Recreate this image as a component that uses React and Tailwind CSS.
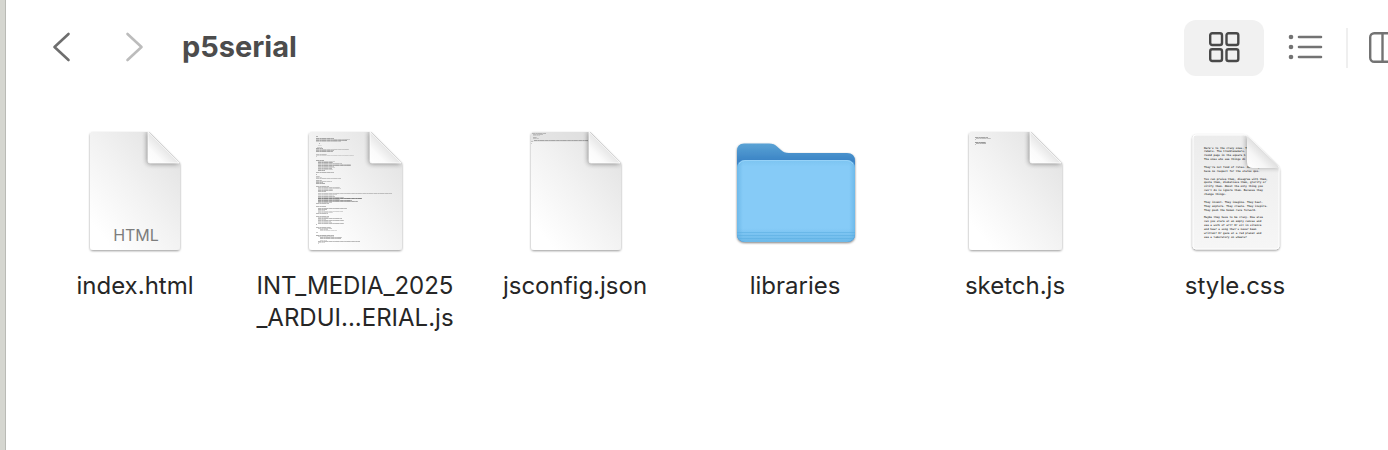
import React, { useId } from "react";

const poem = [
  "Here's to the crazy ones. The",
  "rebels. The troublemakers.",
  "round pegs in the square h",
  "The ones who see things di",
  "",
  "They're not fond of rules. And they",
  "have no respect for the status quo.",
  "",
  "You can praise them, disagree with them,",
  "quote them, disbelieve them, glorify or",
  "vilify them. About the only thing you",
  "can't do is ignore them. Because they",
  "change things.",
  "",
  "They invent. They imagine. They heal.",
  "They explore. They create. They inspire.",
  "They push the human race forward.",
  "",
  "Maybe they have to be crazy. How else",
  "can you stare at an empty canvas and",
  "see a work of art? Or sit in silence",
  "and hear a song that's never been",
  "written? Or gaze at a red planet and",
  "see a laboratory on wheels?",
];

// Thumbnail rows: [x, y, length, opacity]
const longScript = [
  [10, 5, 2, 0.5], [10, 7, 18, 0.6], [10, 8, 34, 0.35], [10, 9, 31, 0.6], [10, 10, 25, 0.3],
  [13, 12, 1, 0.5], [12, 14, 4, 0.2], [11, 16, 5, 0.3],
  [10, 17, 7, 0.6], [10, 18, 33, 0.35], [10, 19, 18, 0.5], [10, 20, 17, 0.6],
  [10, 23, 11, 0.4], [10, 24, 38, 0.25], [10, 25, 1, 0.3],
  [10, 29, 8, 0.6], [12, 30, 17, 0.3], [12, 31, 15, 0.6], [12, 32, 24, 0.4], [12, 33, 33, 0.3], [12, 34, 33, 0.6],
  [12, 35, 16, 0.4], [12, 36, 17, 0.3], [12, 37, 14, 0.5], [12, 38, 15, 0.3], [12, 39, 7, 0.6],
  [10, 41, 18, 0.5], [10, 43, 1, 0.5],
  [10, 45, 4, 0.4], [10, 46, 6, 0.3], [10, 47, 25, 0.4], [10, 49, 6, 0.5], [10, 50, 16, 0.4], [10, 51, 7, 0.5], [10, 52, 9, 0.6],
  [10, 55, 13, 0.5], [12, 56, 22, 0.4], [12, 57, 23, 0.3], [12, 58, 15, 0.3], [12, 59, 15, 0.5], [12, 60, 8, 0.5],
  [12, 62, 74, 0.4], [12, 63, 19, 0.3], [12, 64, 16, 0.2], [12, 65, 17, 0.5], [12, 66, 26, 0.4], [12, 67, 44, 0.9], [12, 68, 22, 0.4], [12, 69, 34, 0.7], [12, 70, 40, 0.6], [12, 71, 14, 0.4], [10, 72, 13, 0.5],
  [10, 75, 10, 0.5], [12, 77, 29, 0.5], [12, 78, 9, 0.5], [12, 79, 7, 0.3], [12, 80, 25, 0.3], [12, 81, 15, 0.3], [10, 82, 12, 0.5],
  [10, 85, 13, 0.5], [12, 86, 11, 0.3], [12, 87, 24, 0.5], [12, 88, 8, 0.3], [12, 89, 26, 0.5], [12, 90, 13, 0.3], [12, 91, 14, 0.3], [12, 92, 26, 0.5], [10, 93, 1, 0.5],
  [10, 96, 15, 0.5], [12, 97, 14, 0.4], [14, 98, 8, 0.4], [14, 99, 17, 0.3], [10, 101, 2, 0.4],
  [10, 104, 18, 0.6], [12, 105, 16, 0.3], [14, 106, 22, 0.5], [14, 107, 21, 0.5], [14, 109, 7, 0.3], [12, 110, 42, 0.5], [12, 111, 7, 0.3], [12, 112, 1, 0.3],
];

const configScript = [
  [6, 2, 14, 0.4], [7, 3, 10, 0.35], [7, 4, 7, 0.2], [7, 6, 4, 0.4], [7, 7, 6, 0.3], [8, 9, 54, 0.55], [5, 10, 2, 0.3], [5, 12, 1, 0.3],
];

const sketchScript = [
  [10, 6, 13, 0.6], [11, 7, 15, 0.4], [10, 8, 1, 0.4], [10, 11, 11, 0.7], [11, 12, 10, 0.5], [10, 13, 1, 0.4],
];

function CodePreview({ rows, x }) {
  return (
    <g fill="#444">
      {rows.map(([left, top, length, opacity], i) => (
        <g key={i} opacity={opacity}>
          <rect x={x + left - 4} y={top + 3} width={length} height="0.9" opacity="0.5" />
          <path
            d={`M${x + left - 4} ${top + 3.45}h${length}`}
            stroke="#333"
            strokeWidth="0.7"
            strokeDasharray="3 1 1.4 0.6 4 1.2"
            opacity="0.6"
          />
        </g>
      ))}
    </g>
  );
}

function DocumentIcon({ left = 5, right = 97, children }) {
  const id = useId();
  const fold = right - 33;
  return (
    <svg viewBox="-1 0 102 128" className="h-32 w-[102px]" aria-hidden="true">
      <defs>
        <linearGradient id={`${id}p`} x1="0.9" y1="0.1" x2="0.15" y2="0.9">
          <stop offset="0" stopColor="#e3e3e3" />
          <stop offset="0.5" stopColor="#f2f2f2" />
          <stop offset="1" stopColor="#fff" />
        </linearGradient>
        <linearGradient id={`${id}f`} x1="0.5" y1="0.5" x2="0" y2="1">
          <stop offset="0" stopColor="#e7e7e7" />
          <stop offset="0.5" stopColor="#fbfbfb" />
          <stop offset="1" stopColor="#fff" />
        </linearGradient>
        <filter id={`${id}b`} x="-50%" y="-50%" width="200%" height="200%">
          <feGaussianBlur stdDeviation="2.5" />
        </filter>
        <filter id={`${id}s`} x="-20%" y="-20%" width="140%" height="140%">
          <feDropShadow dx="0" dy="1" stdDeviation="1.1" floodColor="#000" floodOpacity="0.4" />
        </filter>
        <clipPath id={`${id}c`}>
          <path d={`M${left + 3} 4H${fold + 2}L${right} 35V119q0 3-3 3H${left + 3}q-3 0-3-3V7q0-3 3-3Z`} />
        </clipPath>
      </defs>
      <path
        d={`M${left + 3} 4H${fold + 2}L${right} 35V119q0 3-3 3H${left + 3}q-3 0-3-3V7q0-3 3-3Z`}
        fill={`url(#${id}p)`}
        filter={`url(#${id}s)`}
      />
      <g clipPath={`url(#${id}c)`}>
        {children}
        <path d={`M${fold} 4V33q0 3 3 3H${right}L${fold + 2} 3Z`} fill="#000" opacity="0.42" filter={`url(#${id}b)`} />
      </g>
      <path d={`M${fold + 1} 4V33q0 2 2 2H${right - 1}Z`} fill={`url(#${id}f)`} stroke="#fff" strokeWidth="0.8" />
    </svg>
  );
}

function HtmlIcon() {
  return (
    <DocumentIcon left={5} right={95}>
      <text x="51" y="113" textAnchor="middle" fontFamily="Inter, sans-serif" fontSize="16" fill="#7d7d7d">
        HTML
      </text>
    </DocumentIcon>
  );
}

function ScriptIcon() {
  return (
    <DocumentIcon left={4} right={97}>
      <CodePreview rows={longScript} x={5} />
    </DocumentIcon>
  );
}

function ConfigIcon() {
  return (
    <DocumentIcon left={6} right={96}>
      <path d="M6 4H70V14H6Z" fill="#d8d8d8" opacity="0.5" />
      <CodePreview rows={configScript} x={5} />
    </DocumentIcon>
  );
}

function SketchIcon() {
  return (
    <DocumentIcon left={4} right={97}>
      <CodePreview rows={sketchScript} x={4} />
    </DocumentIcon>
  );
}

function StyleIcon() {
  return (
    <svg viewBox="-1 0 102 128" className="h-32 w-[102px]" aria-hidden="true">
      <defs>
        <linearGradient id="sheet" x1="0" y1="0" x2="0" y2="1">
          <stop offset="0" stopColor="#ececec" />
          <stop offset="1" stopColor="#f6f6f6" />
        </linearGradient>
        <linearGradient id="curl" x1="0.55" y1="0.45" x2="0.05" y2="0.95">
          <stop offset="0" stopColor="#dedede" />
          <stop offset="0.45" stopColor="#f6f6f6" />
          <stop offset="1" stopColor="#fff" />
        </linearGradient>
        <filter id="sheetShadow" x="-20%" y="-20%" width="140%" height="140%">
          <feDropShadow dx="0" dy="1" stdDeviation="1" floodColor="#000" floodOpacity="0.45" />
        </filter>
        <filter id="curlShadow" x="-50%" y="-50%" width="200%" height="200%">
          <feGaussianBlur stdDeviation="2.5" />
        </filter>
        <clipPath id="sheetClip">
          <path d="M11 7H58q3 0 5 2L92 37q2 2 2 5V118q0 3-3 3H11q-3 0-3-3V10q0-3 3-3Z" />
        </clipPath>
      </defs>
      <path
        d="M11 7H58q3 0 5 2L92 37q2 2 2 5V118q0 3-3 3H11q-3 0-3-3V10q0-3 3-3Z"
        fill="url(#sheet)"
        stroke="#fff"
        strokeWidth="1"
        filter="url(#sheetShadow)"
      />
      <g clipPath="url(#sheetClip)">
        <g fontFamily="'DejaVu Sans Mono', monospace" fontSize="2.65" fontWeight="bold" fill="#4a4a4a" textRendering="geometricPrecision">
          {poem.map((line, i) => (
            <text key={i} x="19" y={20.6 + i * 3.87}>
              {line}
            </text>
          ))}
        </g>
        <path d="M61 6V34q0 6 6 6H98Z" fill="#000" opacity="0.3" filter="url(#curlShadow)" />
      </g>
      <path d="M60 7q2 1 4 3L91 36q2 2 3 5-2-1-5-1H68q-6 0-6-6V12q0-4-2-5Z" fill="url(#curl)" />
    </svg>
  );
}

function FolderIcon() {
  return (
    <svg viewBox="-1 0 128 128" className="h-32 w-32" aria-hidden="true">
      <defs>
        <linearGradient id="folderBack" x1="0" y1="0" x2="0" y2="1">
          <stop offset="0" stopColor="#5ba3d5" />
          <stop offset="0.17" stopColor="#3c85c6" />
          <stop offset="1" stopColor="#3c85c6" />
        </linearGradient>
        <linearGradient id="folderFront" x1="0" y1="0" x2="0" y2="1">
          <stop offset="0" stopColor="#7cc4f1" />
          <stop offset="0.08" stopColor="#86cbf7" />
          <stop offset="0.83" stopColor="#86cbf7" />
          <stop offset="1" stopColor="#6cb9e9" />
        </linearGradient>
        <linearGradient id="folderSides">
          <stop offset="0" stopColor="#56a8dd" stopOpacity="0.5" />
          <stop offset="0.05" stopColor="#56a8dd" stopOpacity="0" />
          <stop offset="0.95" stopColor="#56a8dd" stopOpacity="0" />
          <stop offset="1" stopColor="#56a8dd" stopOpacity="0.5" />
        </linearGradient>
        <filter id="folderShadow" x="-20%" y="-20%" width="140%" height="140%">
          <feDropShadow dx="0" dy="1" stdDeviation="1" floodColor="#000" floodOpacity="0.5" />
        </filter>
      </defs>
      <path
        d="M12 15.500H37c4 0 6 1 8 3l4 3.500c2 2 4 3 8 3H115q8 0 8 8V106q0 8-8 8H13q-8 0-8-8V23q0-7.500 7-7.500Z"
        fill="url(#folderBack)"
        filter="url(#folderShadow)"
      />
      <rect x="5" y="32" width="118" height="82" rx="8" fill="url(#folderFront)" />
      <rect x="5" y="32" width="118" height="82" rx="8" fill="url(#folderSides)" />
      <path d="M7 36q2-3.500 6-3.500H115q4 0 6 3.500" fill="none" stroke="#96d2f8" strokeWidth="1" />
      <path d="M5 104.500H123M5 107.500H123M6 110.500H122" stroke="#5aaee2" strokeWidth="1" opacity="0.55" />
    </svg>
  );
}

const files = [
  { name: "index.html", lines: ["index.html"], Icon: HtmlIcon },
  { name: "INT_MEDIA_2025_ARDUINO_SERIAL.js", lines: ["INT_MEDIA_2025", "_ARDUI...ERIAL.js"], Icon: ScriptIcon },
  { name: "jsconfig.json", lines: ["jsconfig.json"], Icon: ConfigIcon },
  { name: "libraries", lines: ["libraries"], Icon: FolderIcon },
  { name: "sketch.js", lines: ["sketch.js"], Icon: SketchIcon },
  { name: "style.css", lines: ["style.css"], Icon: StyleIcon },
];

function Toolbar() {
  return (
    <header className="flex h-24 items-center pl-[34px]">
      <button aria-label="Back" className="flex h-10 w-11 items-center justify-center text-[#6e6e6e]">
        <svg viewBox="0 0 20 32" className="h-8 w-5" fill="none" stroke="currentColor" strokeWidth="2.6" strokeLinecap="round" strokeLinejoin="round">
          <path d="M16.500 2 2.500 15 16.500 28" />
        </svg>
      </button>
      <button aria-label="Forward" disabled className="ml-7 flex h-10 w-11 items-center justify-center text-[#bcbcbc]">
        <svg viewBox="0 0 20 32" className="h-8 w-5" fill="none" stroke="currentColor" strokeWidth="2.600" strokeLinecap="round" strokeLinejoin="round">
          <path d="M3.500 2 17.500 15 3.500 28" />
        </svg>
      </button>
      <h1 className="ml-[26px] flex-1 pb-0.5 text-[29px] leading-9 font-bold text-[#4c4c4c]">p5serial</h1>
      <div className="flex shrink-0 items-center" role="group" aria-label="View">
        <button aria-label="Icon view" aria-pressed="true" className="flex h-14 w-20 items-center justify-center rounded-xl bg-[#f1f1f1] text-[#494949]">
          <svg viewBox="0 0 32 32" className="h-8 w-8" fill="none" stroke="currentColor" strokeWidth="2.400">
            <rect x="2.200" y="1.200" width="11.800" height="11.800" rx="2" />
            <rect x="18.500" y="1.200" width="11.800" height="11.800" rx="2" />
            <rect x="2.200" y="17.200" width="11.800" height="11.800" rx="2" />
            <rect x="18.500" y="17.200" width="11.800" height="11.800" rx="2" />
          </svg>
        </button>
        <button aria-label="List view" className="flex h-14 w-[82px] items-center justify-center text-[#737373]">
          <svg viewBox="-1 0 36 32" className="h-8 w-9" fill="none" stroke="currentColor" strokeWidth="2.600" strokeLinecap="round">
            <path d="M11 5H33M11 15H33M11 25H33" />
            <g fill="currentColor" stroke="none">
              <circle cx="3" cy="5" r="2.300" />
              <circle cx="3" cy="15" r="2.300" />
              <circle cx="3" cy="25" r="2.300" />
            </g>
          </svg>
        </button>
        <span className="h-10 w-0.5 bg-[#efefef]" />
        <button aria-label="Column view" className="flex h-14 w-10 items-center justify-end overflow-hidden text-[#737373]">
          <svg viewBox="0 0 20 32" className="h-8 w-5" fill="none" stroke="currentColor" strokeWidth="2.400">
            <rect x="2.200" y="1.200" width="35.600" height="28.600" rx="4" />
            <path d="M14.500 1V30" />
          </svg>
        </button>
      </div>
    </header>
  );
}

export default function App() {
  return (
    <div className="flex min-h-screen overflow-hidden bg-white font-['Inter','Liberation_Sans',sans-serif]">
      <div className="w-1.5 shrink-0 border-r border-[#b9bab5] bg-[#d5d6d0]" />
      <div className="min-w-0 flex-1">
        <Toolbar />
        <main className="grid grid-cols-[repeat(auto-fill,220px)] pt-8 pl-[19px]">
          {files.map(({ name, lines, Icon }) => (
            <a key={name} href="#" title={name} className="flex flex-col items-center text-2xl leading-8 text-[#262626]">
              <Icon />
              <span className="mt-3.5 flex flex-col items-center whitespace-nowrap">
                {lines.map((line) => (
                  <span key={line}>{line}</span>
                ))}
              </span>
            </a>
          ))}
        </main>
      </div>
    </div>
  );
}
